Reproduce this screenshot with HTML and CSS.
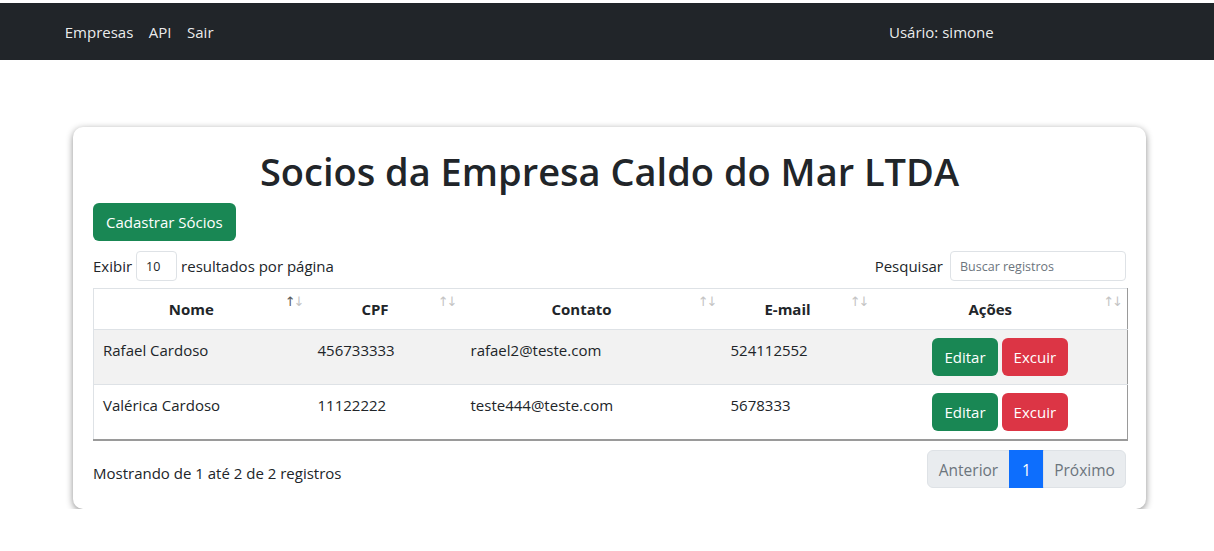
FILE: index.html
```html
<!DOCTYPE html>
<html lang="pt-BR">
<head>
<meta charset="utf-8">
<title>Socios da Empresa</title>
<link rel="stylesheet" href="styles.css">
</head>
<body>
<nav class="navbar">
  <ul class="nav-links">
    <li><a href="#">Empresas</a></li>
    <li><a href="#">API</a></li>
    <li><a href="#">Sair</a></li>
  </ul>
  <div class="nav-user">Usário: simone</div>
</nav>

<main class="main">
  <section class="card">
    <h1 class="title">Socios da Empresa Caldo do Mar LTDA</h1>
    <button class="btn btn-green btn-cad">Cadastrar Sócios</button>

    <div class="controls">
      <label class="length">Exibir <input class="in-len" type="text" value="10"> resultados por página</label>
      <label class="search">Pesquisar <input class="in-search" type="text" placeholder="Buscar registros"></label>
    </div>

    <table class="tbl">
      <colgroup>
        <col class="c1"><col class="c2"><col class="c3"><col class="c4"><col class="c5">
      </colgroup>
      <thead>
        <tr>
          <th>Nome<span class="sort"><span class="up active">↑</span><span class="dn">↓</span></span></th>
          <th>CPF<span class="sort"><span class="up">↑</span><span class="dn">↓</span></span></th>
          <th>Contato<span class="sort"><span class="up">↑</span><span class="dn">↓</span></span></th>
          <th>E-mail<span class="sort"><span class="up">↑</span><span class="dn">↓</span></span></th>
          <th>Ações<span class="sort"><span class="up">↑</span><span class="dn">↓</span></span></th>
        </tr>
      </thead>
      <tbody>
        <tr class="odd">
          <td>Rafael Cardoso</td>
          <td>456733333</td>
          <td>rafael2@teste.com</td>
          <td>524112552</td>
          <td class="acts"><button class="btn btn-green">Editar</button><button class="btn btn-red">Excuir</button></td>
        </tr>
        <tr>
          <td>Valérica Cardoso</td>
          <td>11122222</td>
          <td>teste444@teste.com</td>
          <td>5678333</td>
          <td class="acts"><button class="btn btn-green">Editar</button><button class="btn btn-red">Excuir</button></td>
        </tr>
      </tbody>
    </table>

    <div class="footer">
      <div class="info">Mostrando de 1 até 2 de 2 registros</div>
      <ul class="pager">
        <li class="pg disabled first">Anterior</li>
        <li class="pg current">1</li>
        <li class="pg disabled last">Próximo</li>
      </ul>
    </div>
  </section>
</main>
</body>
</html>
```
FILE: styles.css
```css
* { box-sizing: border-box; }

html, body {
  margin: 0;
  padding: 0;
  background: #fff;
}

body {
  padding-top: 3px;
  font-family: "Open Sans", "Noto Sans", sans-serif;
  font-size: 15px;
  line-height: 24px;
  color: #212529;
}

.navbar {
  height: 57px;
  background: #212529;
  display: flex;
  align-items: center;
  padding-left: 57px;
}

.nav-links {
  list-style: none;
  margin: 0;
  padding: 0;
  display: flex;
  flex: 0 0 824px;
}

.nav-links a {
  display: block;
  padding: 0 7.75px;
  color: rgba(255, 255, 255, 0.93);
  text-decoration: none;
}

.nav-user {
  padding: 0 8px;
  color: rgba(255, 255, 255, 0.93);
}

.main {
  width: 1073px;
  margin: 67px 0 0 73px;
}

.card {
  background: #fff;
  border-radius: 10px;
  box-shadow: 0 2px 7px rgba(0, 0, 0, 0.45);
  padding: 20px 20px 21px 20px;
}

.title {
  margin: 0 0 8px 0;
  text-align: center;
  font-size: 38px;
  font-weight: 600;
  line-height: 48px;
}

.btn {
  border: 0;
  font-family: inherit;
  font-size: 15px;
  line-height: 24px;
  padding: 7px 13px;
  border-radius: 6px;
  color: #fff;
  cursor: pointer;
}

.btn-green { background: #198754; }
.btn-red { background: #dc3545; }

.btn-cad {
  display: block;
  height: 38px;
}

.controls {
  margin-top: 10px;
  display: flex;
  justify-content: space-between;
  align-items: center;
  height: 30px;
}

.controls label {
  display: flex;
  align-items: center;
  gap: 4px;
}

.controls input {
  height: 30px;
  border: 1px solid #dee2e6;
  border-radius: 4px;
  font-family: inherit;
  font-size: 12.5px;
  color: #212529;
  padding: 0 9px;
  outline: none;
}

.in-len { width: 41px; }
.in-search { width: 176px; margin-left: 3px; }
.in-search::placeholder { color: #6c757d; }

.tbl {
  margin-top: 7px;
  width: 1034px;
  table-layout: fixed;
  border-collapse: collapse;
  border-style: solid;
  border-width: 1px 1px 2px 1px;
  border-color: #dee2e6 #9a9a9a #9a9a9a #dee2e6;
}

.c1 { width: 215px; }
.c2 { width: 153px; }
.c3 { width: 260px; }
.c4 { width: 152px; }
.c5 { width: 254px; }

.tbl th {
  position: relative;
  font-weight: 700;
  text-align: center;
  padding: 8px 30px 8px 10px;
  height: 41px;
  border-bottom: 1px solid #dee2e6;
}

.sort {
  position: absolute;
  right: 6px;
  top: 4px;
  font-family: "DejaVu Sans", sans-serif;
  font-size: 13px;
  line-height: 17px;
  font-weight: 400;
  color: #c4c4c4;
  letter-spacing: -2px;
}

.sort .active { color: #5a5a5a; }

.tbl td {
  vertical-align: top;
  text-align: left;
  padding: 8px 10px 8px 9px;
  height: 55px;
  border-top: 1px solid #dee2e6;
}

.tbl tr.odd td { background: #f2f2f2; }

.tbl td.acts {
  text-align: center;
  padding-left: 10px;
  padding-right: 10px;
}

.acts .btn {
  height: 38px;
  padding: 7px 12px;
  margin: 0 2px;
}

.footer {
  margin-top: 9px;
  display: flex;
  justify-content: space-between;
  align-items: flex-start;
}

.info {
  padding-top: 11px;
}

.pager {
  list-style: none;
  margin: 0;
  padding: 0;
  display: flex;
}

.pg {
  height: 38px;
  line-height: 24px;
  padding: 7px 0;
  border: 1px solid #dee2e6;
  margin-left: -1px;
  text-align: center;
  font-size: 15.5px;
}

.pg.disabled {
  background: #e9ecef;
  color: #6c757d;
  width: 83px;
}

.pg.current {
  background: #0d6efd;
  border-color: #0d6efd;
  color: #fff;
  width: 35px;
}

.pg.first { border-radius: 6px 0 0 6px; }
.pg.last { border-radius: 0 6px 6px 0; }
```
